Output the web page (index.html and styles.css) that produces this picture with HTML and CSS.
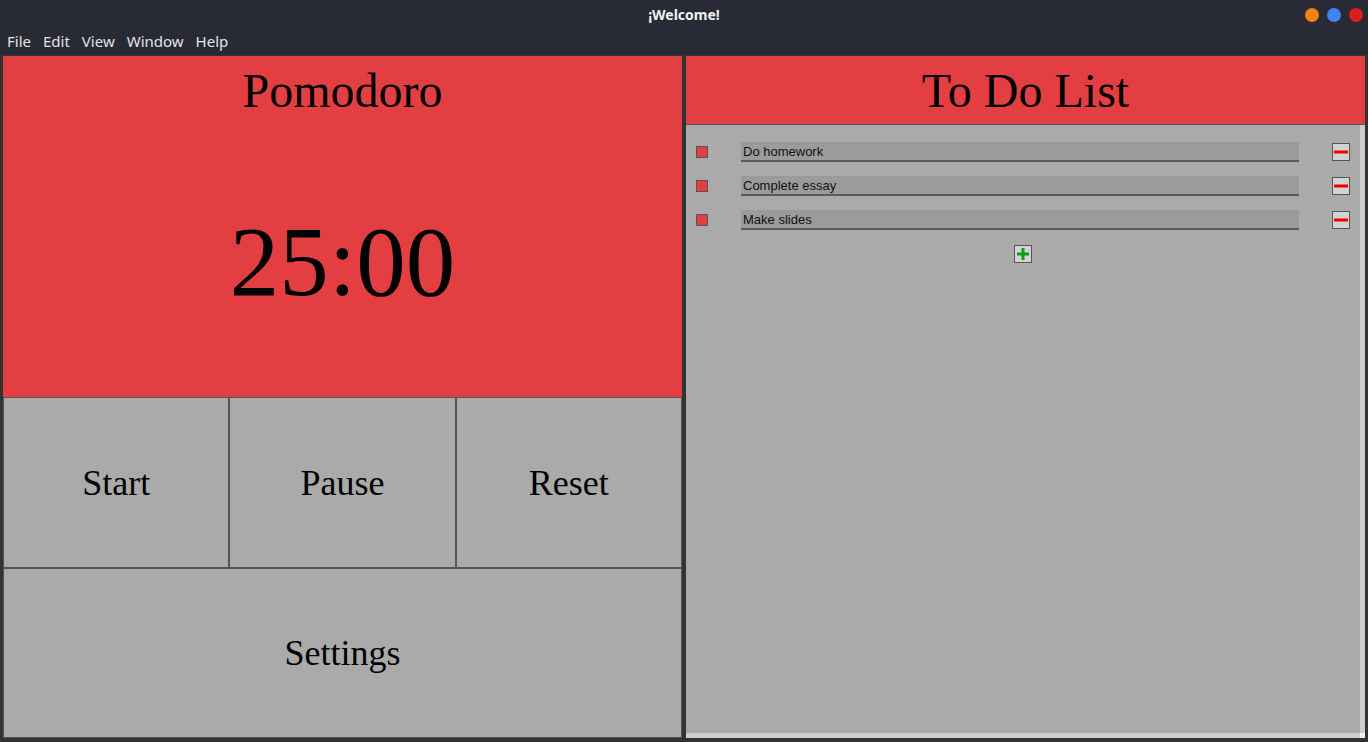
FILE: index.html
```html
<!DOCTYPE html>
<html lang="en">
<head>
<meta charset="utf-8">
<title>¡Welcome!</title>
<link rel="stylesheet" href="styles.css">
</head>
<body>
<div class="window">
  <div class="titlebar">
    <span class="title">¡Welcome!</span>
    <div class="controls">
      <span class="dot dot-orange"></span>
      <span class="dot dot-blue"></span>
      <span class="dot dot-red"></span>
    </div>
  </div>
  <div class="menubar">
    <span class="menu-item">File</span>
    <span class="menu-item">Edit</span>
    <span class="menu-item">View</span>
    <span class="menu-item">Window</span>
    <span class="menu-item">Help</span>
  </div>
  <div class="main">
    <section class="pomodoro">
      <div class="pomo-top">
        <div class="pomo-title">Pomodoro</div>
        <div class="timer">25:00</div>
      </div>
      <div class="btn-row">
        <div class="pbtn">Start</div>
        <div class="pbtn">Pause</div>
        <div class="pbtn">Reset</div>
      </div>
      <div class="btn-row">
        <div class="pbtn">Settings</div>
      </div>
    </section>
    <section class="todo">
      <div class="todo-title">To Do List</div>
      <div class="todo-body">
        <div class="todo-scroll">
          <div class="todo-list">
            <div class="todo-row">
              <span class="check"></span>
              <div class="entry">Do homework</div>
              <span class="sqbtn"><svg width="16" height="16" viewBox="0 0 16 16"><rect x="1" y="6.5" width="14" height="3" fill="#f40000"/></svg></span>
            </div>
            <div class="todo-row">
              <span class="check"></span>
              <div class="entry">Complete essay</div>
              <span class="sqbtn"><svg width="16" height="16" viewBox="0 0 16 16"><rect x="1" y="6.5" width="14" height="3" fill="#f40000"/></svg></span>
            </div>
            <div class="todo-row">
              <span class="check"></span>
              <div class="entry">Make slides</div>
              <span class="sqbtn"><svg width="16" height="16" viewBox="0 0 16 16"><rect x="1" y="6.5" width="14" height="3" fill="#f40000"/></svg></span>
            </div>
          </div>
          <div class="add-wrap">
            <span class="sqbtn"><svg width="16" height="16" viewBox="0 0 16 16"><rect x="2" y="6.5" width="12" height="3" fill="#169a16"/><rect x="6.5" y="2" width="3" height="12" fill="#169a16"/></svg></span>
          </div>
        </div>
        <div class="vscroll"></div>
      </div>
      <div class="hscroll-row">
        <div class="hscroll"></div>
        <div class="corner"></div>
      </div>
    </section>
  </div>
</div>
</body>
</html>
```

FILE: styles.css
```css
* { box-sizing: border-box; }
html, body { margin: 0; padding: 0; }
body { width: 1368px; height: 742px; overflow: hidden; background: #282a36; }

.window {
  width: 1368px;
  height: 742px;
  display: flex;
  flex-direction: column;
  background: #282a36;
}

.titlebar {
  height: 30px;
  display: flex;
  align-items: center;
  justify-content: center;
  position: relative;
}
.title {
  font-family: "Noto Sans", sans-serif;
  font-weight: bold;
  font-size: 14px;
  color: #f2f2f2;
  margin-top: -1px;
}
.controls {
  position: absolute;
  right: 5px;
  top: 8px;
  display: flex;
  gap: 8px;
}
.dot { width: 14px; height: 14px; border-radius: 50%; display: block; }
.dot-orange { background: #f87f0a; }
.dot-blue { background: #3f83f4; }
.dot-red { background: #d81e1e; }

.menubar {
  height: 25px;
  display: flex;
  align-items: center;
  gap: 12px;
  padding-left: 7px;
  padding-bottom: 3px;
  font-family: "Noto Sans", sans-serif;
  font-size: 15px;
  color: #e4e4e4;
}

.main {
  flex: 1;
  display: flex;
  gap: 4px;
  padding: 1px 3px 4px 3px;
  background: #333333;
}

.pomodoro {
  width: 679px;
  display: grid;
  grid-template-rows: 341px 171px 170px;
}
.pomo-top {
  background: #e33f42;
  display: flex;
  flex-direction: column;
}
.pomo-title, .todo-title {
  height: 68px;
  display: flex;
  align-items: center;
  justify-content: center;
  font-family: "Liberation Serif", serif;
  font-size: 48px;
  color: #000;
}
.timer {
  flex: 1;
  display: flex;
  align-items: center;
  justify-content: center;
  font-family: "Liberation Serif", serif;
  font-size: 99px;
  color: #000;
  padding-top: 2px;
}
.btn-row {
  display: flex;
}
.pbtn {
  flex: 1;
  background: #aaaaaa;
  border: 1px solid #555555;
  display: flex;
  align-items: center;
  justify-content: center;
  font-family: "Liberation Serif", serif;
  font-size: 36px;
  color: #000;
}

.todo {
  width: 679px;
  display: flex;
  flex-direction: column;
  background: #aaaaaa;
}
.todo-title {
  background: #e33f42;
  border-bottom: 1px solid #555555;
  height: 69px;
}
.todo-body {
  flex: 1;
  display: flex;
}
.todo-scroll {
  flex: 1;
  padding-top: 17px;
}
.todo-list {
  display: flex;
  flex-direction: column;
  gap: 14px;
}
.todo-row {
  display: flex;
  align-items: center;
  padding: 0 10px;
  height: 20px;
}
.check {
  width: 12px;
  height: 12px;
  background: #e33f42;
  border: 1px solid #555555;
  display: block;
  flex: none;
}
.entry {
  flex: 1;
  margin: 0 33px;
  height: 20px;
  background: #9b9b9b;
  border-bottom: 2px solid #5a5a5a;
  font-family: "Liberation Sans", sans-serif;
  font-size: 13px;
  color: #111;
  padding-left: 2px;
  padding-top: 1px;
  line-height: 18px;
}
.sqbtn {
  width: 18px;
  height: 18px;
  background: #d2d2d2;
  border: 1px solid #555555;
  display: flex;
  align-items: center;
  justify-content: center;
  flex: none;
}
.sqbtn svg { display: block; }
.add-wrap {
  display: flex;
  justify-content: center;
  margin-top: 15px;
}
.vscroll {
  width: 5px;
  background: #cdcdcd;
}
.hscroll-row {
  height: 5px;
  display: flex;
}
.hscroll { flex: 1; background: #cdcdcd; }
.corner { width: 5px; background: #f4f4f4; }
```
